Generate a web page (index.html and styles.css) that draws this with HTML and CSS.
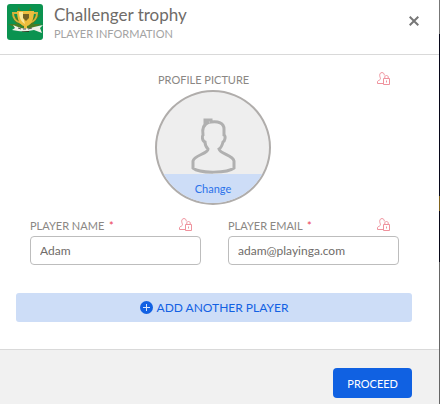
FILE: index.html
```html
<!DOCTYPE html>
<html lang="en">
  <head>
    <meta charset="UTF-8" />
    <meta name="viewport" content="width=device-width, initial-scale=1.0" />
    <title>Challenger trophy</title>
    <link rel="stylesheet" href="styles.css">
  </head>
  <body>
    <!-- Shared lock icon -->
    <svg class="sprite" aria-hidden="true">
      <symbol id="private" viewBox="0 0 13 13">
        <path d="M6.5 11.5H.5V9.6C.8 8.4 2.6 8.4 3.3 7.3C3.9 6.4 2.7 5 2.7 3.4C2.7 1.6 3.5.6 5 .6S7.3 1.6 7.3 3.4" />
        <path d="M6.5 6.5H12.5V12.5H6.5zM7.8 6.5V5C7.8 3 11.2 3 11.2 5V6.5M9.5 8.5V10.5" />
      </symbol>
    </svg>

    <div class="modal">
      <header class="modal-header">
        <svg class="logo" viewBox="0 0 36 36" aria-hidden="true">
          <rect width="36" height="36" rx="3" fill="#0b9350" />
          <path d="M18 25L3 10L12 14L11 3L18 12L24 3L25 14L34 10L26 20L35 20L24 25H11L1 20L10 20L3 13z" fill="#487d23" />
          <path d="M12 9H6C6 14 9 18 14 19M24 9H30C30 14 27 18 22 19" fill="none" stroke="#d6b23a" stroke-width="2" />
          <path d="M10 7H27C27 16 24 21 20 22V25H17V22C13 21 10 16 10 7z" fill="#edbd3d" />
          <path d="M12 8H16C16 13 17 17 18 20C14 18 12 13 12 8z" fill="#fae79a" />
          <path d="M16 10H22V14L19 17L16 14z" fill="#766323" />
          <path d="M15 26H22V28H15z" fill="#263f20" />
          <path d="M6 21L11 23Q18 26 27 23L36 21L33 24L35 29L27 26Q18 28 11 27L5 26L8 24z" fill="#f0f1e8" />
          <path d="M11 24L14 25M16 25L19 25M21 25L25 24" stroke="#555" />
        </svg>
        <div class="heading">
          <h1>Challenger trophy</h1>
          <p>PLAYER INFORMATION</p>
        </div>
        <button class="close" type="button" aria-label="Close">
          <svg viewBox="0 0 10 10"><path d="M.7.7L9.3 9.3M9.3.7L.7 9.3" /></svg>
        </button>
      </header>

      <form class="player-form">
        <div class="fields">
          <!-- Profile picture -->
          <div class="profile">
            <span class="label profile-label">PROFILE PICTURE</span>
            <svg class="private"><use href="#private" /></svg>
            <div class="avatar">
              <svg class="person" viewBox="0 0 46 56" aria-hidden="true">
                <path d="M15 6L15 2H21V4C28 3 34 5 34 11L34 17C36 18 35 23 33 24C32 28 31 30 29 31C30 36 43 37 44 43L44 50C38 55 10 56 3 50L3 43C4 37 18 36 18 31C16 29 15 27 15 24C12 23 12 18 13 17C12 11 14 6 19 4" />
              </svg>
              <button class="change" type="button">Change</button>
            </div>
          </div>

          <!-- Player details -->
          <div class="columns">
            <div class="field">
              <div class="label-row">
                <label class="label" for="name">PLAYER NAME <span class="required">*</span></label>
                <svg class="private"><use href="#private" /></svg>
              </div>
              <input id="name" type="text" value="Adam" />
            </div>
            <div class="field">
              <div class="label-row">
                <label class="label" for="email">PLAYER EMAIL <span class="required">*</span></label>
                <svg class="private"><use href="#private" /></svg>
              </div>
              <input id="email" type="email" value="adam@playinga.com" />
            </div>
          </div>
        </div>

        <button class="add" type="button">
          <svg viewBox="0 0 13 13" aria-hidden="true">
            <circle cx="6.5" cy="6.5" r="6.5" />
            <path d="M6.5 3V10M3 6.5H10" />
          </svg>
          ADD ANOTHER PLAYER
        </button>
      </form>

      <footer class="modal-footer">
        <button class="proceed" type="button">PROCEED</button>
      </footer>
    </div>
  </body>
</html>
```
FILE: styles.css
```css
* {
  box-sizing: border-box;
}

body {
  margin: 0;
  min-height: 100vh;
  display: flex;
  background: linear-gradient(#777 0 34px, #070719 34px 196px, #80631e 196px 211px, #080817 211px 262px, #666 262px);
  color: #6f6c69;
  font-family: "Lato", sans-serif;
}

h1,
p {
  margin: 0;
  font-weight: 400;
}

button,
input {
  font-family: inherit;
}

button {
  border: 0;
  padding: 0;
  cursor: pointer;
}

.sprite {
  position: absolute;
  width: 0;
  height: 0;
}

.modal {
  flex: 1;
  display: flex;
  flex-direction: column;
  margin-right: 1px;
  background: #fff;
}

/* Header */
.modal-header {
  display: flex;
  align-items: flex-start;
  gap: 11px;
  padding: 4px 20px 10px 7px;
  border-bottom: 1px solid #d9d9d9;
}

.logo {
  width: 36px;
  height: 36px;
  margin-bottom: 4px;
}

.heading {
  flex: 1;
}

h1 {
  font-size: 17px;
  line-height: 21px;
}

.heading p {
  font-size: 11px;
  line-height: 17px;
  color: #a3a3a3;
}

.close {
  width: 10px;
  height: 10px;
  margin-top: 12px;
  background: none;
}

.close svg {
  display: block;
  stroke: #777;
  stroke-width: 2;
}

/* Player form */
.player-form {
  flex: 1;
  padding: 17px 27px 27px 16px;
}

.fields {
  padding: 0 13px 0 14px;
}

.label {
  font-size: 11px;
  line-height: 16px;
  color: #8a8784;
}

.required {
  margin-left: 2px;
  color: #ec3951;
}

.private {
  width: 13px;
  height: 13px;
  fill: none;
  stroke: #ef929d;
}

.profile {
  display: grid;
  grid-template-columns: 1fr 116px 1fr;
  row-gap: 2px;
  padding-right: 3px;
}

.profile-label {
  grid-column: 2;
  padding-left: 3px;
}

.profile .private {
  justify-self: end;
  margin-right: 6px;
}

.avatar {
  grid-column: 2;
  display: flex;
  flex-direction: column;
  align-items: center;
  justify-content: space-between;
  height: 115px;
  padding-top: 26px;
  overflow: hidden;
  border: 2px solid #b0adab;
  border-radius: 50%;
  background: #eee;
}

.person {
  width: 46px;
  height: 56px;
  fill: none;
  stroke: #b0b0b0;
  stroke-width: 3;
}

.change {
  width: 100%;
  height: 29px;
  background: #cdddf7;
  color: #2b72ea;
  font-size: 11px;
}

.columns {
  display: grid;
  grid-template-columns: 1fr 1fr;
  gap: 27px;
  margin-top: 13px;
}

.field {
  min-width: 0;
}

.label-row {
  display: flex;
  justify-content: space-between;
  height: 18px;
  padding-right: 9px;
}

input {
  display: block;
  width: 100%;
  height: 29px;
  padding: 0 9px;
  border: 1px solid #bdbdbd;
  border-radius: 4px;
  background: #fff;
  color: #6f6c69;
  font-size: 12px;
}

.add {
  display: flex;
  align-items: center;
  justify-content: center;
  gap: 4px;
  width: 100%;
  height: 29px;
  margin-top: 28px;
  border-radius: 3px;
  background: #cdddf7;
  color: #1261e3;
  font-size: 12px;
}

.add svg {
  width: 13px;
  height: 13px;
  fill: #1261e3;
  stroke: none;
}

.add path {
  stroke: #dce8fb;
}

/* Footer */
.modal-footer {
  display: flex;
  justify-content: flex-end;
  padding: 18px 27px 6px;
  border-top: 1px solid #d9d9d9;
  background: #f1f1f1;
}

.proceed {
  height: 30px;
  padding: 0 14px;
  border-radius: 4px;
  background: #1061e2;
  color: #fff;
  font-size: 11px;
}
```
